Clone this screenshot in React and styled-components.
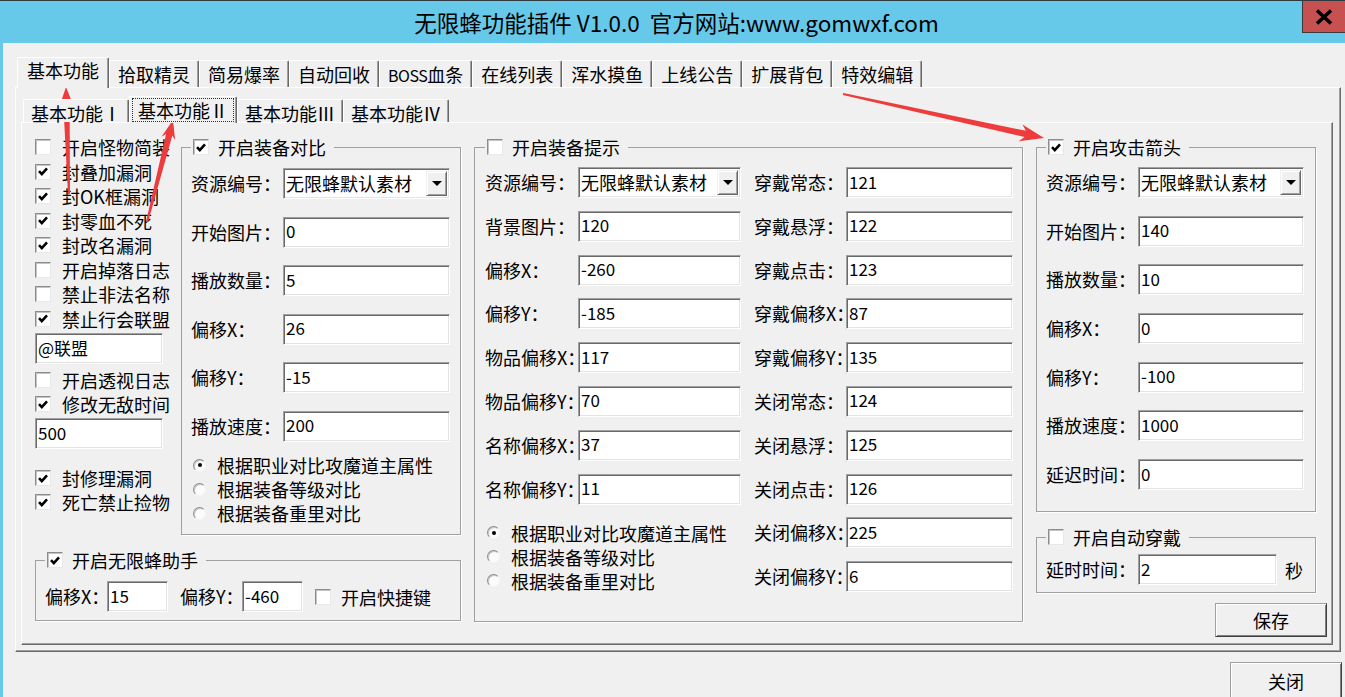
import React from 'react';
import styled, { createGlobalStyle } from 'styled-components';

const GlobalStyle = createGlobalStyle`
  html, body { margin: 0; padding: 0; background: #f0f0f0; }
  body { font-family: "Noto Sans CJK SC", "Noto Sans", sans-serif; color: #000; }
  * { box-sizing: border-box; }
`;

const FONT = '"Noto Sans CJK SC", "Noto Sans", sans-serif';

const Window = styled.div`
  position: relative;
  width: 1345px;
  height: 697px;
  overflow: hidden;
  display: flex;
  flex-direction: column;
  background: #f0f0f0;
`;

const TitleBar = styled.div`
  flex: 0 0 43px;
  display: grid;
  grid-template-columns: 1fr auto 1fr;
  align-items: start;
  background: #66c9ea;
  border-top: 1px solid #2f3a40;
`;

const TitleText = styled.div`
  grid-column: 2;
  padding-left: 8px;
  font-size: 22.5px;
  line-height: 42px;
  white-space: pre;
  color: #000;
`;

const CloseBox = styled.div`
  grid-column: 3;
  justify-self: end;
  width: 43px;
  height: 32px;
  display: flex;
  align-items: center;
  justify-content: center;
  background: #c75050;
  border-left: 1px solid #3b3b3b;
  border-bottom: 1px solid #3b3b3b;
`;

const Body = styled.div`
  flex: 1;
  border-left: 3px solid #66c9ea;
  padding: 14px 0 0 12px;
`;

const TabStrip = styled.div`
  position: relative;
  z-index: 1;
  display: flex;
  align-items: flex-end;
  height: ${p => p.$h}px;
  padding-left: 2px;
`;

const Tab = styled.div`
  height: ${p => (p.$active ? p.$h + 4 : p.$h)}px;
  margin-bottom: ${p => (p.$active ? -1 : 0)}px;
  padding: 0 ${p => (p.$active ? p.$pad + 1 : p.$pad)}px;
  padding-top: ${p => (p.$active ? 1 : 2)}px;
  display: flex;
  align-items: flex-start;
  background: #f0f0f0;
  border-top: 1px solid #fff;
  border-left: 1px solid #fff;
  border-right: 1px solid #696969;
  box-shadow: inset -1px 0 0 #a0a0a0;
  border-radius: 2px 2px 0 0;
  font-size: 18px;
  line-height: 22px;
  white-space: nowrap;
`;

const Focus = styled.span`
  border: 1px dotted #333;
  padding: 0 5px;
  margin: 0 -6px;
  line-height: 22px;
`;

const Narrow = styled.span`
  font-size: 16px;
  letter-spacing: -0.5px;
`;

const Pane = styled.div`
  width: ${p => p.$w}px;
  height: ${p => p.$h}px;
  border: 1px solid;
  border-color: #fff #696969 #696969 #fff;
  box-shadow: inset -1px -1px 0 #a0a0a0;
  padding: ${p => p.$pad};
`;

const Content = styled.div`
  display: flex;
  align-items: flex-start;
`;

const LeftArea = styled.div`
  width: 426px;
  display: flex;
  flex-direction: column;
`;

const TopRow = styled.div`
  display: flex;
  align-items: flex-start;
  gap: 18px;
`;

const CheckList = styled.div`
  width: 128px;
  display: flex;
  flex-direction: column;
`;

const RightCol = styled.div`
  width: 280px;
  margin-left: 13px;
  display: flex;
  flex-direction: column;
`;

const Group = styled.fieldset`
  margin: ${p => p.$mt || 0}px 0 0 ${p => p.$ml || 0}px;
  padding: ${p => p.$pt}px ${p => p.$pr ?? 9}px ${p => p.$pb}px ${p => p.$pl ?? 9}px;
  width: ${p => p.$w}px;
  min-width: 0;
  border: 1px solid #a0a0a0;
  box-shadow: 1px 1px 0 #fff;
`;

const Legend = styled.legend`
  margin: 0;
  padding: 0 8px 0 2px;
  height: 24px;
  display: flex;
  align-items: center;
  gap: 9px;
  font-size: 18px;
  line-height: 24px;
  background: #f0f0f0;
  white-space: nowrap;
`;

const Stack = styled.div`
  display: flex;
  flex-direction: column;
  gap: ${p => p.$gap}px;
  margin-top: ${p => p.$mt || 0}px;
`;

const Columns = styled.div`
  display: flex;
  align-items: flex-start;
  gap: 13px;
`;

const FieldRow = styled.div`
  display: flex;
  align-items: center;
  height: 31px;
`;

const Label = styled.span`
  flex: none;
  width: ${p => p.$w}px;
  margin-left: ${p => p.$ml || 0}px;
  font-size: 18px;
  line-height: 31px;
  white-space: nowrap;
`;

const Edit = styled.input`
  flex: none;
  width: ${p => p.$w}px;
  height: 31px;
  margin: ${p => p.$m || 0};
  padding: 0 2px 3px;
  font-family: ${FONT};
  font-size: 17px;
  color: #000;
  background: #fff;
  border: 1px solid;
  border-color: #a0a0a0 #fff #fff #a0a0a0;
  box-shadow: inset 1px 1px 0 #696969, inset -1px -1px 0 #e3e3e3;
  outline: none;
`;

const SelectBox = styled.div`
  flex: none;
  width: ${p => p.$w}px;
  height: 31px;
  display: flex;
  align-items: center;
  padding: 0 2px;
  background: #fff;
  border: 1px solid;
  border-color: #a0a0a0 #fff #fff #a0a0a0;
  box-shadow: inset 1px 1px 0 #696969, inset -1px -1px 0 #e3e3e3;
`;

const SelectText = styled.span`
  flex: 1;
  font-size: 18px;
  line-height: 27px;
  white-space: nowrap;
  overflow: hidden;
`;

const DropBtn = styled.span`
  flex: 0 0 21px;
  height: 25px;
  display: flex;
  align-items: center;
  justify-content: center;
  background: #f0f0f0;
  border: 1px solid;
  border-color: #f0f0f0 #696969 #696969 #f0f0f0;
  box-shadow: inset 1px 1px 0 #fff, inset -1px -1px 0 #a0a0a0;
`;

const Triangle = styled.span`
  width: 0;
  height: 0;
  border-left: 5px solid transparent;
  border-right: 5px solid transparent;
  border-top: 5px solid #000;
`;

const CheckRow = styled.div`
  flex: none;
  display: flex;
  align-items: center;
  gap: ${p => p.$gap ?? 11}px;
  height: ${p => p.$h ?? 24}px;
  margin-top: ${p => p.$mt || 0}px;
  margin-left: ${p => p.$ml || 0}px;
  padding-left: ${p => p.$pl || 0}px;
  font-size: 18px;
  line-height: 24px;
  white-space: nowrap;
`;

const Box = styled.span`
  flex: 0 0 16px;
  width: 16px;
  height: 16px;
  display: flex;
  align-items: center;
  justify-content: center;
  background: #fff;
  border: 1px solid;
  border-color: #8c8c8c #e8e8e8 #e8e8e8 #8c8c8c;
  box-shadow: inset 1px 1px 0 #c4c4c4;
`;

const Round = styled.span`
  flex: 0 0 13px;
  width: 13px;
  height: 13px;
  border-radius: 50%;
  display: flex;
  align-items: center;
  justify-content: center;
  background: #fbfbfb;
  border: 1px solid;
  border-color: #8c8c8c #f4f4f4 #f4f4f4 #8c8c8c;
  box-shadow: inset 1px 1px 0 #c8c8c8;
`;

const Dot = styled.span`
  width: 4px;
  height: 4px;
  border-radius: 50%;
  background: #000;
`;

const Button = styled.button`
  width: 112px;
  height: ${p => p.$h || 34}px;
  margin: ${p => p.$m || 0};
  align-self: flex-end;
  font-family: ${FONT};
  font-size: 18px;
  color: #000;
  background: #f0f0f0;
  border: 1px solid;
  border-color: #a0a0a0 #404040 #404040 #a0a0a0;
  box-shadow: inset 1px 1px 0 #fff, inset -1px -1px 0 #808080;
  padding: 0;
`;

const Footer = styled.div`
  display: flex;
  justify-content: flex-end;
  padding: 10px 3px 0 0;
`;

const Unit = styled.span`
  margin-left: 8px;
  font-size: 18px;
`;

const Overlay = styled.svg`
  position: absolute;
  top: 0;
  left: 0;
  pointer-events: none;
`;

const Check = ({ on }) => (
  <Box>
    {on && (
      <svg width="10" height="9" viewBox="0 0 10 9">
        <path d="M1 4.2 L3.8 7.1 L9 1.4" fill="none" stroke="#000" strokeWidth="2.6" />
      </svg>
    )}
  </Box>
);

const CheckItem = ({ text, on, ...rest }) => (
  <CheckRow {...rest}>
    <Check on={on} />
    <span>{text}</span>
  </CheckRow>
);

const Radio = ({ text, on }) => (
  <CheckRow $pl={2} $gap={11}>
    <Round>{on && <Dot />}</Round>
    <span>{text}</span>
  </CheckRow>
);

const Field = ({ label, value, lw, w }) => (
  <FieldRow>
    <Label $w={lw}>{label}</Label>
    <Edit $w={w} defaultValue={value} readOnly />
  </FieldRow>
);

const Select = ({ label, lw, w }) => (
  <FieldRow>
    <Label $w={lw}>{label}</Label>
    <SelectBox $w={w}>
      <SelectText>无限蜂默认素材</SelectText>
      <DropBtn><Triangle /></DropBtn>
    </SelectBox>
  </FieldRow>
);

const mainTabs = ['基本功能', '拾取精灵', '简易爆率', '自动回收', 'BOSS', '在线列表', '浑水摸鱼', '上线公告', '扩展背包', '特效编辑'];
const subTabs = ['基本功能Ⅰ', '基本功能Ⅱ', '基本功能Ⅲ', '基本功能Ⅳ'];

const radios = [
  ['根据职业对比攻魔道主属性', true],
  ['根据装备等级对比', false],
  ['根据装备重里对比', false],
];

const compareFields = [
  ['开始图片：', '0'],
  ['播放数量：', '5'],
  ['偏移X：', '26'],
  ['偏移Y：', '-15'],
  ['播放速度：', '200'],
];

const tipLeft = [
  ['背景图片：', '120'],
  ['偏移X：', '-260'],
  ['偏移Y：', '-185'],
  ['物品偏移X：', '117'],
  ['物品偏移Y：', '70'],
  ['名称偏移X：', '37'],
  ['名称偏移Y：', '11'],
];

const tipRight = [
  ['穿戴常态：', '121'],
  ['穿戴悬浮：', '122'],
  ['穿戴点击：', '123'],
  ['穿戴偏移X：', '87'],
  ['穿戴偏移Y：', '135'],
  ['关闭常态：', '124'],
  ['关闭悬浮：', '125'],
  ['关闭点击：', '126'],
  ['关闭偏移X：', '225'],
  ['关闭偏移Y：', '6'],
];

const arrowFields = [
  ['开始图片：', '140'],
  ['播放数量：', '10'],
  ['偏移X：', '0'],
  ['偏移Y：', '-100'],
  ['播放速度：', '1000'],
  ['延迟时间：', '0'],
];

// red annotation arrows drawn over the dialog
const arrows = [
  { x1: 69, y1: 194, x2: 66, y2: 87, head: 7, headLen: 19, neck: 3.2 },
  { x1: 147, y1: 222, x2: 173, y2: 120, head: 7, headLen: 19, neck: 3.2 },
  { x1: 843, y1: 94, x2: 1044, y2: 138, head: 8.5, headLen: 24, neck: 3.2 },
];

function arrowPoints({ x1, y1, x2, y2, head, headLen, neck }) {
  const dx = x2 - x1;
  const dy = y2 - y1;
  const len = Math.hypot(dx, dy);
  const ux = dx / len;
  const uy = dy / len;
  const at = (t, w) => [x1 + ux * t - uy * w, y1 + uy * t + ux * w];
  return [
    at(0, 1), at(len - headLen * 0.8, neck), at(len - headLen, head), at(len, 0),
    at(len - headLen, -head), at(len - headLen * 0.8, -neck), at(0, -1),
  ].map(p => p.map(v => v.toFixed(1)).join(',')).join(' ');
}

export default function App() {
  return (
    <Window>
      <GlobalStyle />
      <TitleBar>
        <TitleText>无限蜂功能插件 V1.0.0  官方网站:www.gomwxf.com</TitleText>
        <CloseBox>
          <svg width="18" height="16" viewBox="0 0 18 16">
            <path d="M2 1.5 L16 14.5 M16 1.5 L2 14.5" stroke="#000" strokeWidth="3.6" />
          </svg>
        </CloseBox>
      </TitleBar>

      <Body>
        <TabStrip $h={30}>
          {mainTabs.map((t, i) => (
            <Tab key={t} $active={i === 0} $h={27} $pad={8}>
              {t === 'BOSS' ? <span><Narrow>BOSS</Narrow>血条</span> : t}
            </Tab>
          ))}
        </TabStrip>

        <Pane $w={1326} $h={565} $pad="8px 0 0 5px">
          <TabStrip $h={26}>
            {subTabs.map((t, i) => (
              <Tab key={t} $active={i === 1} $h={23} $pad={7}>
                {i === 1 ? <Focus>{t}</Focus> : t}
              </Tab>
            ))}
          </TabStrip>

          <Pane $w={1312} $h={523} $pad="12px 0 0 13px">
            <Content>
              <LeftArea>
                <TopRow>
                  <CheckList>
                    <CheckItem text="开启怪物简装" $h={24.5} />
                    <CheckItem text="封叠加漏洞" on $h={24.5} />
                    <CheckItem text="封OK框漏洞" on $h={24.5} />
                    <CheckItem text="封零血不死" on $h={24.5} />
                    <CheckItem text="封改名漏洞" on $h={24.5} />
                    <CheckItem text="开启掉落日志" $h={24.5} />
                    <CheckItem text="禁止非法名称" $h={24.5} />
                    <CheckItem text="禁止行会联盟" on $h={24.5} />
                    <Edit $w={128} $m="2px 0 0" defaultValue="@联盟" readOnly />
                    <CheckItem text="开启透视日志" $mt={4} />
                    <CheckItem text="修改无敌时间" on />
                    <Edit $w={128} $m="2px 0 0" defaultValue="500" readOnly />
                    <CheckItem text="封修理漏洞" on $mt={17} />
                    <CheckItem text="死亡禁止捡物" on />
                  </CheckList>

                  <Group $w={280} $pt={9} $pb={9}>
                    <Legend><Check on /><span>开启装备对比</span></Legend>
                    <Stack $gap={17.5}>
                      <Select label="资源编号：" lw={92} w={167} />
                      {compareFields.map(([l, v]) => (
                        <Field key={l} label={l} value={v} lw={92} w={167} />
                      ))}
                    </Stack>
                    <Stack $gap={0} $mt={11.5}>
                      {radios.map(([t, on]) => <Radio key={t} text={t} on={on} />)}
                    </Stack>
                  </Group>
                </TopRow>

                <Group $w={426} $mt={13} $pt={9} $pb={8}>
                  <Legend><Check on /><span>开启无限蜂助手</span></Legend>
                  <FieldRow>
                    <Label $w={62}>偏移X：</Label>
                    <Edit $w={61} defaultValue="15" readOnly />
                    <Label $w={62} $ml={12}>偏移Y：</Label>
                    <Edit $w={61} defaultValue="-460" readOnly />
                    <CheckItem text="开启快捷键" $gap={10} $ml={12} />
                  </FieldRow>
                </Group>
              </LeftArea>

              <Group $w={549} $ml={13} $pt={8} $pb={28} $pl={10} $pr={9}>
                <Legend><Check /><span>开启装备提示</span></Legend>
                <Columns>
                  <div>
                    <Stack $gap={12.8}>
                      <Select label="资源编号：" lw={93} w={163} />
                      {tipLeft.map(([l, v]) => (
                        <Field key={l} label={l} value={v} lw={93} w={163} />
                      ))}
                    </Stack>
                    <Stack $gap={0} $mt={16.4}>
                      {radios.map(([t, on]) => <Radio key={t} text={t} on={on} />)}
                    </Stack>
                  </div>
                  <Stack $gap={12.8}>
                    {tipRight.map(([l, v]) => (
                      <Field key={l} label={l} value={v} lw={92} w={167} />
                    ))}
                  </Stack>
                </Columns>
              </Group>

              <RightCol>
                <Group $w={280} $pt={8} $pb={21}>
                  <Legend><Check on /><span>开启攻击箭头</span></Legend>
                  <Stack $gap={17.7}>
                    <Select label="资源编号：" lw={92} w={166} />
                    {arrowFields.map(([l, v]) => (
                      <Field key={l} label={l} value={v} lw={92} w={166} />
                    ))}
                  </Stack>
                </Group>

                <Group $w={280} $mt={13} $pt={5} $pb={7}>
                  <Legend><Check /><span>开启自动穿戴</span></Legend>
                  <FieldRow>
                    <Label $w={92}>延时时间：</Label>
                    <Edit $w={139} defaultValue="2" readOnly />
                    <Unit>秒</Unit>
                  </FieldRow>
                </Group>

                <Button $m="10px -11px 0 0">保存</Button>
              </RightCol>
            </Content>
          </Pane>
        </Pane>

        <Footer>
          <Button $h={38}>关闭</Button>
        </Footer>
      </Body>

      <Overlay width="1345" height="697" viewBox="0 0 1345 697">
        {arrows.map((a, i) => (
          <polygon key={i} points={arrowPoints(a)} fill="#ee3b3b" />
        ))}
      </Overlay>
    </Window>
  );
}
